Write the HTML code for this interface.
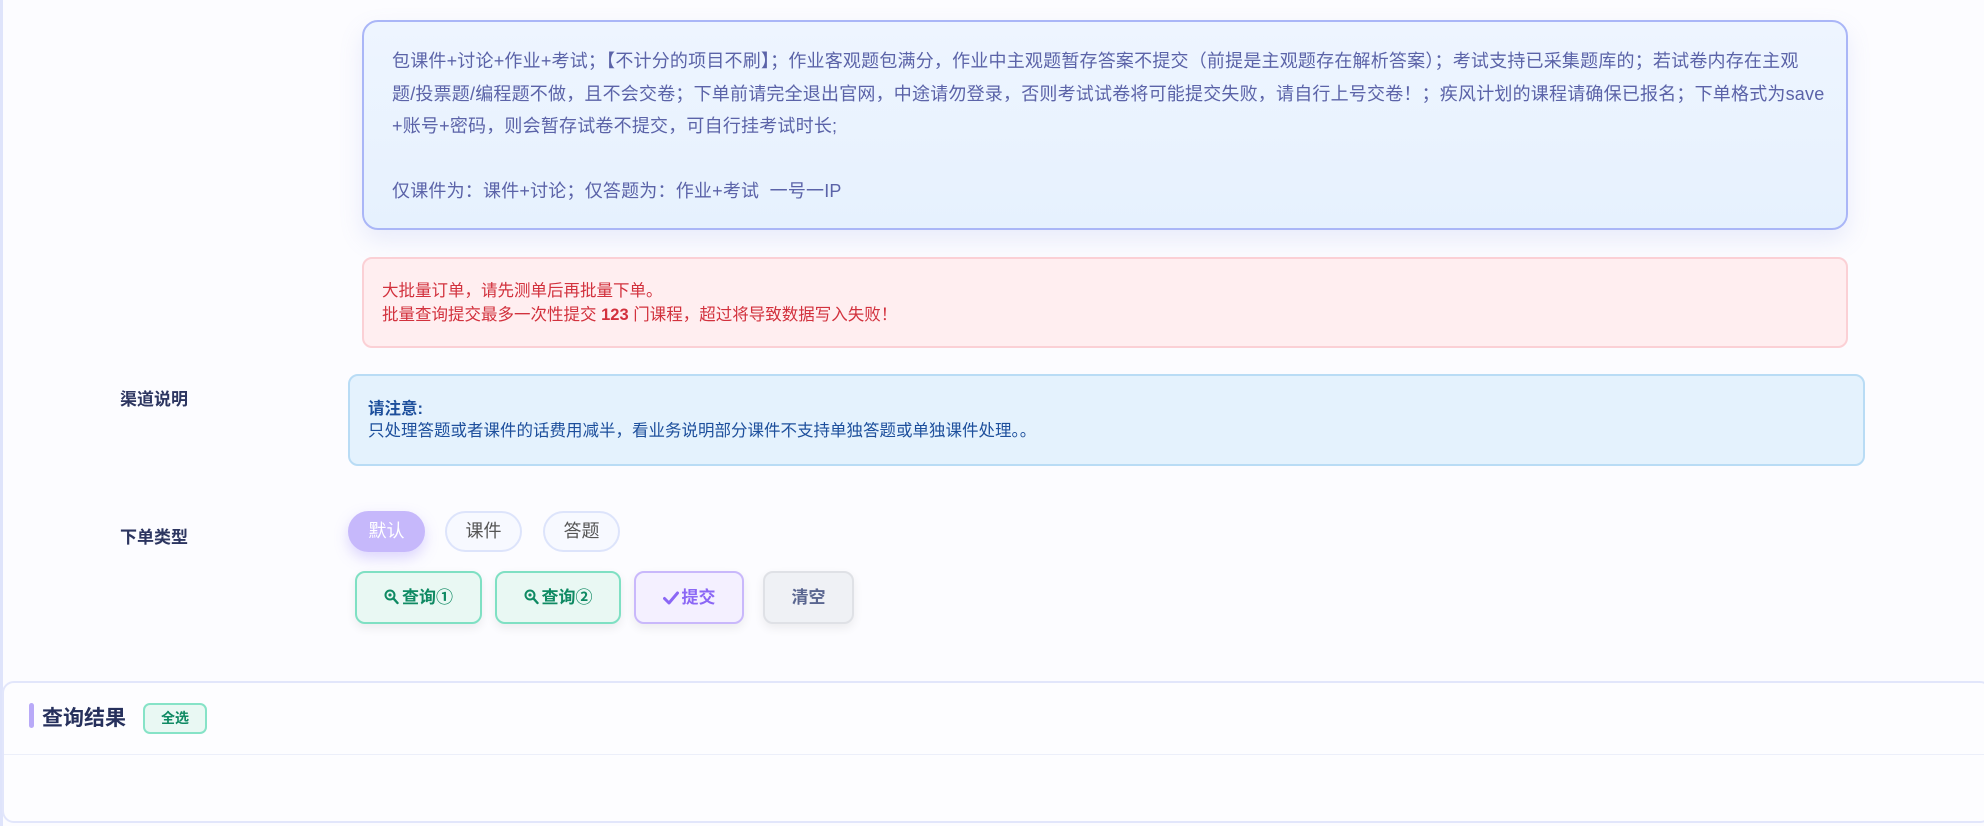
<!DOCTYPE html>
<html><head><meta charset="utf-8"><style>
*{box-sizing:border-box;margin:0;padding:0}
body{width:1984px;height:826px;background:#fcfcff;font-family:"Liberation Sans","Noto Sans CJK SC",sans-serif;position:relative;overflow:hidden}
.abs{position:absolute}
.info{left:362px;top:20px;width:1486px;height:210px;border:2px solid #aab6f7;border-radius:16px;background:linear-gradient(180deg,#eef5ff,#e6f1fe);box-shadow:0 10px 24px rgba(120,140,220,.15);color:#5b63a8;font-size:18px;line-height:32.5px;padding:23px 28px;white-space:nowrap;letter-spacing:0.2px}
.warn{left:362px;top:257px;width:1486px;height:91px;border:2px solid #fbd0d5;border-radius:10px;background:#ffeef0;color:#d2313d;font-size:16.5px;line-height:24px;padding:20px 18px;white-space:nowrap}
.lab{font-size:17px;font-weight:bold;color:#2c3560}
.note{left:348px;top:374px;width:1517px;height:92px;border:2px solid #b9dcf5;border-radius:10px;background:#e4f2fd;color:#1d4f9c;font-size:16.5px;line-height:22px;padding:22px 18px;white-space:nowrap}
.pill{height:41px;top:511px;border-radius:21px;font-size:18px;line-height:37px;text-align:center;border:2px solid #dde4fb;background:#f7f9ff;color:#555}
.btn{top:571px;height:53px;border-radius:10px;font-size:17px;font-weight:bold;line-height:49px;text-align:center;box-shadow:0 4px 10px rgba(0,0,0,.07)}
.g{border:2px solid #7fe0c3;background:#e9f8f3;color:#0f8a63}
.btn svg{vertical-align:-2px;margin-right:3px}
</style></head><body>
<div class="abs" style="left:0;top:0;width:3px;height:826px;background:#dfe4fb"></div>
<div class="abs info">包课件+讨论+作业+考试；【不计分的项目不刷】；作业客观题包满分，作业中主观题暂存答案不提交（前提是主观题存在解析答案）；考试支持已采集题库的；若试卷内存在主观<br>题/投票题/编程题不做，且不会交卷；下单前请完全退出官网，中途请勿登录，否则考试试卷将可能提交失败，请自行上号交卷！；疾风计划的课程请确保已报名；下单格式为save<br>+账号+密码，则会暂存试卷不提交，可自行挂考试时长;<br><br>仅课件为：课件+讨论；仅答题为：作业+考试&nbsp;&nbsp;一号一IP</div>
<div class="abs warn">大批量订单，请先测单后再批量下单。<br>批量查询提交最多一次性提交 <b>123</b> 门课程，超过将导致数据写入失败！</div>
<div class="abs lab" style="left:120px;top:385px">渠道说明</div>
<div class="abs note"><b>请注意:</b><br>只处理答题或者课件的话费用减半，看业务说明部分课件不支持单独答题或单独课件处理。。</div>
<div class="abs lab" style="left:120px;top:523px">下单类型</div>
<div class="abs pill" style="left:348px;width:77px;background:#c6b8fb;border-color:#c6b8fb;color:#fff;box-shadow:0 6px 14px rgba(160,140,250,.35)">默认</div>
<div class="abs pill" style="left:445px;width:77px">课件</div>
<div class="abs pill" style="left:543px;width:77px">答题</div>
<div class="abs btn g" style="left:355px;width:127px"><svg width="15" height="16" viewBox="0 0 15 16"><circle cx="6" cy="6" r="4.5" fill="none" stroke="#0f8a63" stroke-width="2"/><circle cx="6" cy="6" r="1.6" fill="#0f8a63"/><path d="M9.5 9.5L13.5 14" stroke="#0f8a63" stroke-width="2.4" stroke-linecap="round"/></svg>查询①</div>
<div class="abs btn g" style="left:495px;width:126px"><svg width="15" height="16" viewBox="0 0 15 16"><circle cx="6" cy="6" r="4.5" fill="none" stroke="#0f8a63" stroke-width="2"/><circle cx="6" cy="6" r="1.6" fill="#0f8a63"/><path d="M9.5 9.5L13.5 14" stroke="#0f8a63" stroke-width="2.4" stroke-linecap="round"/></svg>查询②</div>
<div class="abs btn" style="left:634px;width:110px;border:2px solid #c9b8fb;background:#f4f0ff;color:#8b67f5"><svg width="16" height="14" viewBox="0 0 16 14"><path d="M1.5 7.5L6 12L14.5 2" fill="none" stroke="#8b67f5" stroke-width="3" stroke-linecap="round" stroke-linejoin="round"/></svg>提交</div>
<div class="abs btn" style="left:763px;width:91px;border:2px solid #dfe1e6;background:#eff1f5;color:#5a6690">清空</div>
<div class="abs" style="left:2px;top:681px;width:1990px;height:142px;border:2px solid #e2e6fb;border-radius:12px;background:#fdfdff"></div>
<div class="abs" style="left:29px;top:703px;width:5px;height:25px;border-radius:3px;background:#b9aaf8"></div>
<div class="abs" style="left:42px;top:702px;font-size:21px;font-weight:bold;color:#26305c">查询结果</div>
<div class="abs" style="left:143px;top:703px;width:64px;height:31px;border:2px solid #86e3c7;border-radius:7px;background:#e9f8f3;color:#0f8a63;font-size:14px;font-weight:bold;line-height:27px;text-align:center">全选</div>
<div class="abs" style="left:4px;top:754px;width:1980px;height:1px;background:#eceffa"></div>
</body></html>
